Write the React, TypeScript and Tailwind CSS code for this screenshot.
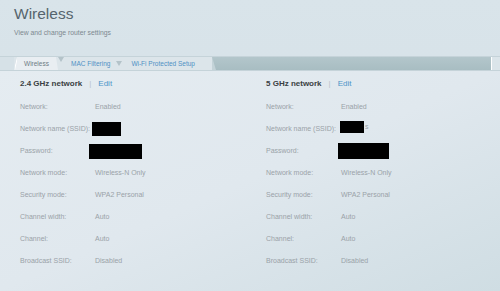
import React from "react";

const rows24: [string, React.ReactNode][] = [
  ["Network:", "Enabled"],
  ["Network name (SSID):", <span className="ml-[-3px] inline-block h-[14px] w-[29px] bg-black align-middle" />],
  ["Password:", <span className="ml-[-6px] inline-block h-[15px] w-[53px] bg-black align-middle" />],
  ["Network mode:", "Wireless-N Only"],
  ["Security mode:", "WPA2 Personal"],
  ["Channel width:", "Auto"],
  ["Channel:", "Auto"],
  ["Broadcast SSID:", "Disabled"],
];

const rows5: [string, React.ReactNode][] = [
  ["Network:", "Enabled"],
  [
    "Network name (SSID):",
    <span className="ml-[-1px] inline-flex items-center">
      <span className="inline-block h-[12px] w-[24px] bg-black" />
      <span className="ml-[1px]">s</span>
    </span>,
  ],
  ["Password:", <span className="ml-[-3px] inline-block h-[16px] w-[51px] bg-black align-middle" />],
  ["Network mode:", "Wireless-N Only"],
  ["Security mode:", "WPA2 Personal"],
  ["Channel width:", "Auto"],
  ["Channel:", "Auto"],
  ["Broadcast SSID:", "Disabled"],
];

function Column({ title, rows }: { title: string; rows: [string, React.ReactNode][] }) {
  return (
    <div className="w-[246px] shrink-0">
      <div className="flex h-[22px] items-center text-[8px]">
        <span className="font-bold text-[#3a3f43]">{title}</span>
        <span className="ml-[7px] text-[#b9c2c8]">|</span>
        <span className="ml-[7px] text-[#4d95c8]">Edit</span>
      </div>
      {rows.map(([label, value], i) => (
        <div key={i} className="flex h-[22px] items-center pt-[2px] text-[7px] text-[#9aa2a8]">
          <span className="w-[75px]">{label}</span>
          <span>{value}</span>
        </div>
      ))}
    </div>
  );
}

function Notch() {
  return (
    <svg width="6" height="5" viewBox="0 0 6 5" className="shrink-0 self-start">
      <polygon points="0,0 6,0 3,5" fill="#b4c3c9" />
    </svg>
  );
}

export default function App() {
  return (
    <div
      className="flex h-[291px] w-[500px] flex-col overflow-hidden bg-gradient-to-b from-[#d9e4ea] to-[#d3dfe5]"
      style={{ fontFamily: '"Liberation Sans", Arial, sans-serif' }}
    >
      <div className="h-[56px] shrink-0 pl-[14px] pt-[3px]">
        <div className="text-[15.5px] leading-[22px] text-[#56646d]">Wireless</div>
        <div className="mt-[3px] text-[6.8px] text-[#7d8990]">View and change router settings</div>
      </div>
      <div className="flex h-[15px] shrink-0 border-y border-[#c5d3d9] bg-gradient-to-b from-[#b3c6cb] to-[#a8bdc2]">
        <div className="w-[14px] bg-[#d6e1e7]" />
        <div className="flex h-full flex-1 items-end">
          <div className="flex h-full w-[198px] items-center bg-[#dce5ea] text-[6.5px]">
            <div className="relative flex h-full w-[44px] items-center bg-[#e9eef2] pl-[10px] text-[#6e7a82] [clip-path:polygon(3px_0,42px_0,44px_100%,0_100%)]">
              <div className="absolute left-[1px] top-0 h-full w-[2px] bg-white [clip-path:polygon(100%_0,100%_30%,0_100%,0_60%)]" />
              Wireless
            </div>
            <Notch />
            <div className="ml-[7px] text-[#4f90c4]">MAC Filtering</div>
            <div className="ml-[6px]">
              <Notch />
            </div>
            <div className="ml-[9px] text-[#4f90c4]">Wi-Fi Protected Setup</div>
          </div>
          <div className="h-full w-[4px] bg-[#c4d3d8] [clip-path:polygon(0_0,100%_100%,0_100%)]" />
          <div className="flex-1" />
          <div className="h-full w-[1px] bg-white" />
          <div className="h-full w-[8px] bg-[#dbe5ea]" />
        </div>
      </div>
      <div className="flex flex-1 bg-gradient-to-br from-[#e5ecf1] via-[#e0e8ee] to-[#cfdde3] pl-[20px] pt-[2px]">
        <Column title="2.4 GHz network" rows={rows24} />
        <Column title="5 GHz network" rows={rows5} />
      </div>
    </div>
  );
}
